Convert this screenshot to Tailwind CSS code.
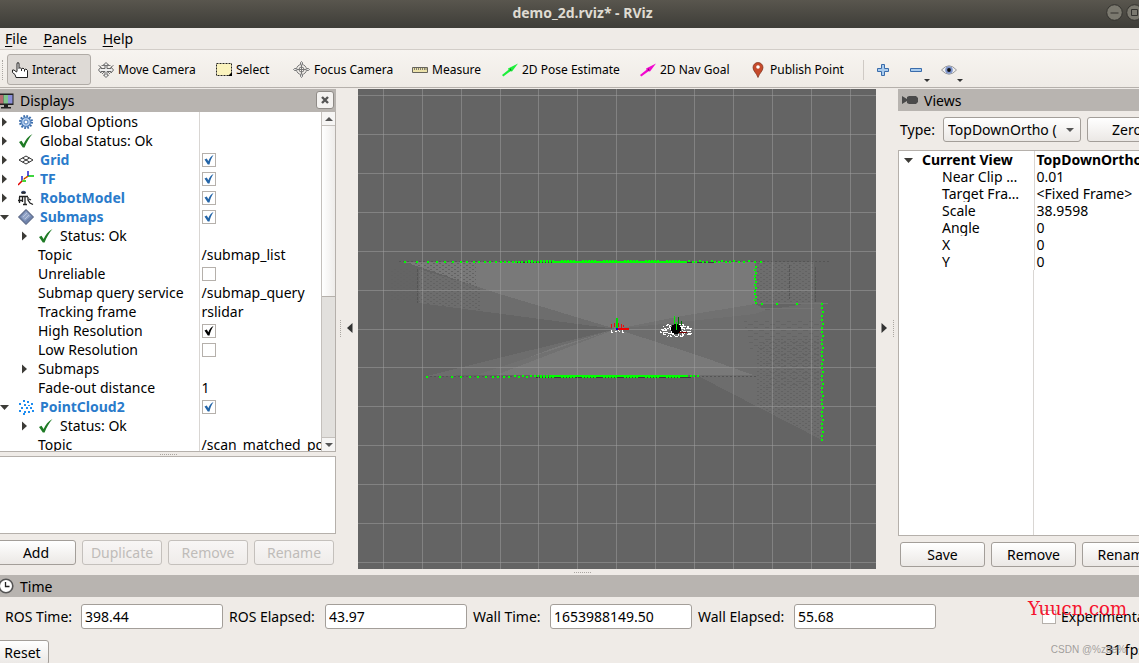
<!DOCTYPE html>
<html lang="en">
<head>
  <meta charset="UTF-8">
  <title>demo_2d.rviz* - RViz</title>
  <meta name="viewport" content="width=device-width, initial-scale=1.0">
  <script src="https://cdn.jsdelivr.net/npm/@tailwindcss/browser@4"></script>
</head>
<body class="h-screen overflow-hidden flex flex-col bg-[#efebe7] text-black text-[14px] leading-[19px] font-['Noto_Sans',sans-serif]">

  <!-- Shared icons -->
  <svg class="hidden">
    <symbol id="i-gear" viewBox="0 0 16 16"><circle cx="8" cy="8" r="5.8" fill="#a9c4e6" stroke="#3a6cab" stroke-width="2.4" stroke-dasharray="1.6 1.4"/><circle cx="8" cy="8" r="4.4" fill="#b7cfee" stroke="#4f80bd"/><circle cx="8" cy="8" r="2" fill="#fff" stroke="#4f80bd"/></symbol>
    <symbol id="i-ok" viewBox="0 0 16 16"><path d="M1 9 3.500 7.800 5.600 11C7.600 6.500 10 3.500 14.500 1 11 5 8.500 9.500 6.600 14.500H4.800z" fill="#1e7a24"/></symbol>
    <symbol id="i-grid" viewBox="0 0 16 16"><path d="M8 4 15 8 8 12 1 8zM4.500 6 11.500 10M11.500 6 4.500 10" fill="none" stroke="#333"/></symbol>
    <symbol id="i-tf" viewBox="0 0 16 16" fill="none" stroke-width="1.500"><path d="M0 14 4 10M6 8 10 5" stroke="#e00000"/><path d="M4 10H8M10 5H16" stroke="#00c800"/><path d="M4 10V5M10 5V0" stroke="#2020d0"/><path d="M4 10 10 5" stroke="#c8c800" stroke-dasharray="1 1"/></symbol>
    <symbol id="i-robot" viewBox="0 0 16 16"><path d="M3 2Q5.500-.5 8 2V3.500H3z" fill="#3b4a6b"/><path d="M4 3H7M1 6.500H10M1.500 7V13M4.500 7V12M7 7V15M10 7V10L12 13 15 14.500M0 10.500H4M5 14.500H9M11 9 13 10" stroke="#222" stroke-width="1.300" fill="none"/></symbol>
    <symbol id="i-map" viewBox="0 0 16 16"><path d="M8 .5 15.500 8 8 15.500.5 8z" fill="#6f83ab" stroke="#4a5674"/><path d="M8 2 13 7 7 12 3 8z" fill="#91a3c6"/><path d="M5 8 9 4M7 10 11 6" stroke="#c3cde2" stroke-width=".8"/></symbol>
    <symbol id="i-cloud" viewBox="0 0 16 16"><path d="M5 1h2v2H5zM9 2h2v2H9zM1 4h2v2H1zM6 5h2v2H6zM13 4h2v2h-2zM3 8h2v2H3zM8 8h2v2H8zM12 8h2v2h-2zM14 11h2v2h-2zM1 11h2v2H1zM6 12h2v2H6zM10 12h2v2h-2zM5 14h2v2H5zM10 6h2v1h-2z" fill="#1e8df0"/></symbol>
    <symbol id="i-tick" viewBox="0 0 14 14"><path d="M2.500 6.500 4.800 5.500 6.300 8.200C7.300 5.500 9 3.200 11.500 2 9.500 5 8.200 8 7.500 11.500H5.800z" fill="currentColor"/></symbol>
    <symbol id="i-right" viewBox="0 0 9 10"><path d="M2 .5 7 5 2 9.500z" fill="#3c3b37"/></symbol>
    <symbol id="i-down" viewBox="0 0 9 10"><path d="M0 3H9L4.500 8z" fill="#3c3b37"/></symbol>
  </svg>

  <!-- Title bar -->
  <header class="h-7 shrink-0 relative flex items-center justify-center pl-[26px] bg-linear-to-b from-[#59564e] to-[#3e3d38]">
    <h1 class="font-bold text-[#dfdbd2] pb-1">demo_2d.rviz* - RViz</h1>
    <div class="absolute top-1 right-0 flex gap-[3px]">
      <button aria-label="Minimize"><svg class="size-[17px]" viewBox="0 0 17 17"><circle cx="8.500" cy="8.500" r="7.800" fill="#7b796f" stroke="#34332f"/><path d="M4.500 9H12.500" stroke="#34332f"/></svg></button>
      <button aria-label="Maximize" class="w-[13px] overflow-hidden"><svg class="size-[17px] max-w-none" viewBox="0 0 17 17"><circle cx="8.500" cy="8.500" r="7.800" fill="#7b796f" stroke="#34332f"/><path d="M5.500 5.500H11.500V11.500H5.500z" fill="none" stroke="#34332f"/></svg></button>
    </div>
  </header>

  <!-- Menu -->
  <nav class="h-[22px] shrink-0 flex items-center gap-4 px-[5px] border-b border-[#d2cdc8]">
    <button><span class="underline underline-offset-2">F</span>ile</button>
    <button><span class="underline underline-offset-2">P</span>anels</button>
    <button><span class="underline underline-offset-2">H</span>elp</button>
  </nav>

  <!-- Tools -->
  <div class="h-[38px] pt-[2px] shrink-0 flex items-center gap-[2px] text-[12px] whitespace-nowrap bg-linear-to-b from-[#f7f4f0] to-[#efebe6] border-b border-[#b5b0ab] mb-px">
    <div class="w-[3px] h-5 ml-[2px] border-l border-dotted border-[#aaa6a1]"></div>
    <button class="flex items-center gap-1 w-[84px] h-[31px] pl-1 border border-[#b0aba6] rounded-[3px] bg-[#dedad6]">
      <svg class="size-4" viewBox="0 0 16 16"><path d="M5 9V2Q5 .5 6 .5T7 2V6.500L8 5.500 9.500 7 11 6 12.500 7.500 14 7 15.500 8.500V15.500H4L3 12.500.5 10.500V8H2L4.500 10z" fill="#fff" stroke="#222"/><path d="M9.500 7V9M12.500 7.500V9.500" stroke="#222"/></svg>
      Interact
    </button>
    <button class="flex items-center gap-1 w-[116px] h-[31px] pl-[5px]">
      <svg class="size-4" viewBox="0 0 16 16"><path d="M8 .5 10.500 3H9V6.500H13V5L15.500 8 13 11V9.500H9V13H10.500L8 15.500 5.500 13H7V9.500H3V11L.5 8 3 5V6.500H7V3H5.500z" fill="#eee" stroke="#666"/><path d="M.5 3.500 3 5M15.500 3.500 13 5M3.500 3.500H12.500M4 12 6 10M12 12 10 10" stroke="#777" fill="none"/></svg>
      Move Camera
    </button>
    <button class="flex items-center gap-1 w-[75px] h-[31px] pl-[5px]">
      <svg class="size-4" viewBox="0 0 16 16"><path d="M.5 1.500H15.500V13.500H.5z" fill="#fbf3bd" stroke="#222" stroke-dasharray="2 1"/><path d="M12 14 16 10V14z"/></svg>
      Select
    </button>
    <button class="flex items-center gap-1 w-[117px] h-[31px] pl-[5px]">
      <svg class="size-[17px]" viewBox="0 0 17 17" fill="none" stroke="#777"><circle cx="8.500" cy="8.500" r="5"/><circle cx="8.500" cy="8.500" r="2.500"/><path d="M8.500 3V14M3 8.500H14"/><path d="M7.500 3.500V1.500L8.500.5 9.500 1.500V3.500M7.500 13.500V15.500L8.500 16.500 9.500 15.500V13.500M3.500 7.500H1.500L.5 8.500 1.500 9.500H3.500M13.500 7.500H15.500L16.500 8.500 15.500 9.500H13.500" fill="#ddd"/></svg>
      Focus Camera
    </button>
    <button class="flex items-center gap-1 w-[88px] h-[31px] pl-[5px]">
      <svg class="size-4" viewBox="0 0 16 16"><path d="M.5 5.500H15.500V10.500H.5z" fill="#ece2ab" stroke="#66645c"/><path d="M2.500 6V8M4.500 6V8M6.500 6V8M8.500 6V8M10.500 6V8M12.500 6V8M14 6V8" stroke="#66645c" stroke-width=".8"/></svg>
      Measure
    </button>
    <button class="flex items-center gap-1 w-[136px] h-[31px] pl-[5px]">
      <svg class="size-4" viewBox="0 0 16 16"><path d="M0 13 6.500 7.800 6 6.500 16 1.500 10 9.500 8.500 9.200 1.300 14.500z" fill="#1df03a"/><path d="M8.500 6 9.500 8.500 7.500 8.500z" fill="#0a8a1c"/></svg>
      2D Pose Estimate
    </button>
    <button class="flex items-center gap-1 w-[110px] h-[31px] pl-[5px]">
      <svg class="size-4" viewBox="0 0 16 16"><path d="M0 13 6.500 7.800 6 6.500 16 1.500 10 9.500 8.500 9.200 1.300 14.500z" fill="#f207cf"/><path d="M8.500 6 9.500 8.500 7.500 8.500z" fill="#8a0a76"/></svg>
      2D Nav Goal
    </button>
    <button class="flex items-center gap-[6px] w-[114px] h-[31px] pl-[5px]">
      <svg class="w-3 h-4" viewBox="0 0 12 16"><path d="M6 .5A5 5 0 0 1 11 5.500C11 9 7.500 11 6 15.500 4.500 11 1 9 1 5.500A5 5 0 0 1 6 .5z" fill="#c64a2b" stroke="#7c2f1b" stroke-width=".7"/><circle cx="6" cy="5" r="1.800" fill="#fff"/></svg>
      Publish Point
    </button>
    <div class="h-5 border-l border-[#cfcac5] mr-[11px]"></div>
    <button aria-label="Add tool" class="mr-[19px]"><svg class="size-3" viewBox="0 0 12 12"><path d="M4.500.5H7.500V4.500H11.500V7.500H7.500V11.500H4.500V7.500H.5V4.500H4.500z" fill="#a9cbed" stroke="#3a6cab"/></svg></button>
    <button aria-label="Remove tool" class="relative mr-[17px]"><svg class="size-3" viewBox="0 0 12 12"><path d="M.5 4.500H11.500V7.500H.5z" fill="#a9cbed" stroke="#3a6cab"/></svg><svg class="absolute left-[14px] top-[15px] w-[6px] h-1" viewBox="0 0 6 4"><path d="M0 0H6L3 3z" fill="#333"/></svg></button>
    <button aria-label="Visibility" class="relative"><svg class="size-4" viewBox="0 0 16 16"><path d="M.5 8Q8-.5 15.500 8 8 16.500.5 8z" fill="#eee" stroke="#999"/><circle cx="8" cy="8" r="3.800" fill="#7f95cc"/><circle cx="8" cy="8" r="1.900" fill="#111"/></svg><svg class="absolute left-4 top-[17px] w-[6px] h-1" viewBox="0 0 6 4"><path d="M0 0H6L3 3z" fill="#333"/></svg></button>
  </div>

  <main class="flex-1 min-h-0 flex">
    <!-- Displays -->
    <section class="w-[336px] shrink-0 flex flex-col pb-[10px]">
      <div class="h-[23px] shrink-0 flex items-center bg-[#b8b4b0]">
        <svg class="w-[14px] h-4 mr-[6px]" viewBox="0 0 14 16"><path d="M-2 .5H13.500V12H-2z" fill="#222"/><path d="M-1 2H3.500V10.500H-1z" fill="#b56a6f"/><path d="M3.500 2H8V10.500H3.500z" fill="#7fc48c"/><path d="M8 2H12.500V10.500H8z" fill="#8a8fd8"/><path d="M4 12H8V14H11V15.500H1V14H4z" fill="#222"/></svg>
        <h2>Displays</h2>
        <button aria-label="Close" class="ml-auto mr-[2px] mb-[2px] size-[18px] grid place-items-center border border-[#8f8b87] rounded-[3px] bg-[#f4f2f0]"><svg class="size-2" viewBox="0 0 8 8"><path d="M1 1 7 7M7 1 1 7" stroke="#555" stroke-width="2.400"/></svg></button>
      </div>
      <div class="flex-1 min-h-0 flex border-r border-b border-[#b5b0ab] bg-white">
        <div class="flex-1 min-w-0 overflow-hidden">
          <table class="w-full table-fixed border-collapse whitespace-nowrap">
            <colgroup><col class="w-[199px]"><col></colgroup>
            <tbody id="displays"></tbody>
          </table>
        </div>
        <div class="w-[14px] flex flex-col border-l border-[#c4c0bc] bg-[#e2e0dd]">
          <div class="h-[14px] grid place-items-center bg-[#f6f5f4] border-b border-[#c4c0bc]"><svg class="w-2 h-1" viewBox="0 0 8 4"><path d="M0 4 4 0 8 4z" fill="#555"/></svg></div>
          <div class="h-[171px] bg-linear-to-r from-white to-[#eeecea] border-b border-[#b5b0ab]"></div>
          <div class="h-[14px] mt-auto grid place-items-center bg-[#f6f5f4] border-t border-[#c4c0bc]"><svg class="w-2 h-1" viewBox="0 0 8 4"><path d="M0 0H8L4 4z" fill="#555"/></svg></div>
        </div>
      </div>
      <div class="h-1 shrink-0 grid place-items-center"><div class="w-[17px] border-t border-dotted border-[#aaa6a1]"></div></div>
      <div class="h-[78px] shrink-0 border border-l-0 border-[#b5b0ab] bg-white"></div>
      <div class="flex shrink-0 gap-[6px] mt-[6px]">
        <button class="-ml-1 w-20 h-[25px] border border-[#a39e99] rounded-[3px] bg-linear-to-b from-white to-[#ebe8e5]">Add</button>
        <button disabled class="w-20 h-[25px] border border-[#c4c0bc] rounded-[3px] bg-linear-to-b from-[#f8f6f5] to-[#efecea] text-[#bfbcb9]">Duplicate</button>
        <button disabled class="w-20 h-[25px] border border-[#c4c0bc] rounded-[3px] bg-linear-to-b from-[#f8f6f5] to-[#efecea] text-[#bfbcb9]">Remove</button>
        <button disabled class="w-20 h-[25px] border border-[#c4c0bc] rounded-[3px] bg-linear-to-b from-[#f8f6f5] to-[#efecea] text-[#bfbcb9]">Rename</button>
      </div>
    </section>

    <div class="w-[22px] shrink-0 flex items-center justify-center gap-[6px] pr-[2px] pb-2">
      <div class="h-[17px] border-l border-dotted border-[#aaa6a1]"></div>
      <svg class="w-[6px] h-[10px]" viewBox="0 0 6 10"><path d="M5.500 0V10L0 5z" fill="#333"/></svg>
    </div>

    <!-- 3D view, origin at the lidar frame -->
    <section class="flex-1 min-w-0 flex flex-col">
      <svg id="scene" class="flex-1 min-h-0 w-full bg-[#646464]" viewBox="-258 -240 518 480" preserveAspectRatio="xMidYMid slice" shape-rendering="crispEdges">
        <defs>
          <pattern id="dither" width="6" height="4" patternUnits="userSpaceOnUse"><path d="M0 0h2v1H0zM3 2h2v1H3z" fill="#626262"/></pattern>
          <pattern id="streak" width="11" height="6" patternUnits="userSpaceOnUse"><path d="M0 1h5v1H0zM6 4h4v1H6z" fill="#646464"/></pattern>
        </defs>
        <path d="M0 0-197-60V-26zM0 0-189 47-131 46zM0 0 139-17 200-27H206V111L84 48zM139-67H198V-26H139z" fill="#6d6d6d"/>
        <path d="M0 0-123-37-211-67H139V-17L60-7zM0 0-60 18-133 46H81L137 46 84 27z" fill="#797979"/>
        <path d="M0 0 139-15 150-19 139-25 60-12zM0 0-140 46-120 46z" fill="#717171"/>
        <path d="M-211-67H-140V-42L-197-60zM-197-60-135-42V-19L-197-26zM-225-60H-198V-28H-225zM139-67H199V-27H139zM150 10H205V109L140 76V20z" fill="url(#dither)"/>
        <path d="M128-8H205V60H150V20H134z" fill="url(#streak)"/>
        <path d="M142-26H212M142-21H198" stroke="#747474"/>
        <path d="M-198.500-60V-26M199-62V-27M173-64V-30" stroke="#555" stroke-dasharray="3 1"/>
        <path d="M-217-67.500H215M-190 47.500H140" stroke="#555" stroke-dasharray="2 2"/>
        <path d="M-100-66.500H100M-80 48.500H75" stroke="#3c3c3c"/>
        <g id="grid" fill="#a0a0a0" fill-opacity=".5"></g>
        <g id="scan" fill="#00ff00"></g>
        <!-- lidar frame -->
        <path d="M-5-5v4M-2-6v4M2-6v4M5-5v4M7-4v2" stroke="#e01010"/>
        <path d="M-5 1v2h2M-1 2h2M2 1l2 2M6 1v2h2" stroke="#fff" fill="none"/>
        <path d="M0-11h2V0H0z" fill="#00e000"/><path d="M1-1h12V1H1z" fill="#f00000"/><path d="M0-1h2v2H0z" fill="#0000f0"/>
        <!-- base frame -->
        <g id="labels" fill="#fff"></g>
        <circle cx="60" cy="0" r="5" fill="#000"/>
        <path d="M63 3h8" stroke="#700"/>
        <path d="M58.500-13v8M60.500-7v8" stroke="#00f000"/><path d="M62.500-12v8M65.500-8v4" stroke="#007000"/>
      </svg>
      <div class="h-[6px] shrink-0 grid justify-center items-center pr-[70px]"><div class="w-[17px] border-t border-dotted border-[#aaa6a1]"></div></div>
    </section>

    <div class="w-[22px] shrink-0 flex items-center justify-center gap-[6px] pb-2">
      <svg class="w-[6px] h-[10px]" viewBox="0 0 6 10"><path d="M.5 0V10L6 5z" fill="#333"/></svg>
      <div class="h-[17px] border-l border-dotted border-[#aaa6a1]"></div>
    </div>

    <!-- Views -->
    <section class="w-[241px] shrink-0 overflow-hidden">
      <div class="w-[272px] h-full flex flex-col pb-2">
        <div class="h-[22px] shrink-0 flex items-center pl-1 gap-[6px] bg-[#b8b4b0]">
          <svg class="w-4 h-[10px]" viewBox="0 0 16 10"><path d="M0 1 5 4V2L7 1H14L16 3V7L14 9H7L5 8V6L0 9z" fill="#4a4a4a"/></svg>
          <h2>Views</h2>
        </div>
        <div class="flex items-center shrink-0 pl-[2px] mt-[6px] mb-2">
          <label for="view-type" class="w-[43px]">Type:</label>
          <div class="relative w-[138px]">
            <select id="view-type" class="appearance-none w-full h-[25px] pl-1 pr-[23px] border border-[#a39e99] rounded-[3px] bg-linear-to-b from-white to-[#ebe8e5]"><option>TopDownOrtho (rviz)</option></select>
            <svg class="absolute right-[7px] top-[11px] w-2 h-1 pointer-events-none" viewBox="0 0 8 4"><path d="M0 0H8L4 4z" fill="#555"/></svg>
          </div>
          <button class="w-20 h-[25px] ml-[6px] border border-[#a39e99] rounded-[3px] bg-linear-to-b from-white to-[#ebe8e5]">Zero</button>
        </div>
        <div class="flex-1 min-h-0 border border-[#b5b0ab] bg-white leading-[17px] flex flex-col">
          <table class="w-full table-fixed border-collapse whitespace-nowrap">
            <colgroup><col class="w-[135px]"><col></colgroup>
            <tbody id="views"></tbody>
          </table>
          <div class="flex-1 w-[135px] border-r border-[#d9d6d3]"></div>
        </div>
        <div class="flex shrink-0 gap-[6px] pl-[2px] mt-[6px]">
          <button class="w-[85px] h-[25px] border border-[#a39e99] rounded-[3px] bg-linear-to-b from-white to-[#ebe8e5]">Save</button>
          <button class="w-[85px] h-[25px] border border-[#a39e99] rounded-[3px] bg-linear-to-b from-white to-[#ebe8e5]">Remove</button>
          <button class="w-[85px] h-[25px] border border-[#a39e99] rounded-[3px] bg-linear-to-b from-white to-[#ebe8e5]">Rename</button>
        </div>
      </div>
    </section>
  </main>

  <!-- Time -->
  <footer class="shrink-0 relative h-[88px] overflow-hidden whitespace-nowrap">
    <div class="h-[22px] flex items-center gap-[6px] bg-[#b8b4b0]">
      <svg class="w-[14px] h-4" viewBox="0 0 14 16"><circle cx="6" cy="8" r="6.800" fill="#fff" stroke="#555" stroke-width="1.600"/><path d="M5.500 4V8.500H9.500" fill="none" stroke="#222" stroke-width="1.300"/></svg>
      <h2>Time</h2>
    </div>
    <div class="flex items-center gap-[6px] pl-[5px] mt-[7px]">
      <label for="ros-time" class="w-[70px] shrink-0">ROS Time:</label>
      <input id="ros-time" value="398.44" class="w-[142px] shrink-0 h-[25px] px-[3px] border border-[#a39e99] rounded-[3px] bg-white">
      <label for="ros-elapsed" class="w-[90px] shrink-0">ROS Elapsed:</label>
      <input id="ros-elapsed" value="43.97" class="w-[142px] shrink-0 h-[25px] px-[3px] border border-[#a39e99] rounded-[3px] bg-white">
      <label for="wall-time" class="w-[71px] shrink-0">Wall Time:</label>
      <input id="wall-time" value="1653988149.50" class="w-[142px] shrink-0 h-[25px] px-[3px] border border-[#a39e99] rounded-[3px] bg-white">
      <label for="wall-elapsed" class="w-[90px] shrink-0">Wall Elapsed:</label>
      <input id="wall-elapsed" value="55.68" class="w-[142px] shrink-0 h-[25px] px-[3px] border border-[#a39e99] rounded-[3px] bg-white">
      <label class="ml-[100px] shrink-0 flex items-center gap-[5px]"><input type="checkbox" class="appearance-none size-[14px] border border-[#b5b0ab] bg-white">Experimental</label>
    </div>
    <div class="flex justify-between items-start mt-[11px]">
      <button class="-ml-1 w-[53px] h-[25px] border border-[#a39e99] rounded-[3px] bg-linear-to-b from-white to-[#ebe8e5]">Reset</button>
      <span class="-mr-[6px]">31 fps</span>
    </div>
    <span class="absolute right-3 top-[23px] text-[18px] leading-[22px] text-[#f5122d] font-['DejaVu_Serif',serif]">Yuucn.com</span>
    <span class="absolute right-[13px] top-[68px] text-[10px] leading-[13px] text-[#8c8a88]/80 font-['Liberation_Sans',sans-serif]">CSDN @%zde%</span>
  </footer>

<script>
// kind: top = display, sub = status or group, prop = plain property
const displays = [
  { kind: "top", arrow: "right", icon: "gear", name: "Global Options" },
  { kind: "top", arrow: "right", icon: "ok", name: "Global Status: Ok" },
  { kind: "top", arrow: "right", icon: "grid", name: "Grid", bold: true, check: "on" },
  { kind: "top", arrow: "right", icon: "tf", name: "TF", bold: true, check: "on" },
  { kind: "top", arrow: "right", icon: "robot", name: "RobotModel", bold: true, check: "on" },
  { kind: "top", arrow: "down", icon: "map", name: "Submaps", bold: true, check: "on" },
  { kind: "sub", arrow: "right", icon: "ok", name: "Status: Ok" },
  { kind: "prop", name: "Topic", value: "/submap_list" },
  { kind: "prop", name: "Unreliable", check: "off" },
  { kind: "prop", name: "Submap query service", value: "/submap_query" },
  { kind: "prop", name: "Tracking frame", value: "rslidar" },
  { kind: "prop", name: "High Resolution", check: "on" },
  { kind: "prop", name: "Low Resolution", check: "off" },
  { kind: "sub", arrow: "right", name: "Submaps" },
  { kind: "prop", name: "Fade-out distance", value: "1" },
  { kind: "top", arrow: "down", icon: "cloud", name: "PointCloud2", bold: true, check: "on" },
  { kind: "sub", arrow: "right", icon: "ok", name: "Status: Ok" },
  { kind: "prop", name: "Topic", value: "/scan_matched_points2" }
];
const indent = { top: "pl-0", sub: "pl-5", prop: "pl-[38px]" };

function checkbox(row) {
  const tick = row.check === "on" ? `<svg class="absolute inset-0 size-[14px] pointer-events-none ${row.bold ? "text-[#2465a8]" : "text-black"}"><use href="#i-tick"/></svg>` : "";
  return `<span class="relative block size-[14px]"><input type="checkbox" aria-label="${row.name}" ${row.check === "on" ? "checked" : ""} class="block appearance-none size-[14px] border border-[#b5b0ab] bg-white">${tick}</span>`;
}

document.getElementById("displays").innerHTML = displays.map(row => {
  const arrow = row.arrow ? `<svg class="w-[9px] h-[10px] shrink-0 mr-[9px]"><use href="#i-${row.arrow}"/></svg>` : "";
  const icon = row.icon ? `<svg class="size-4 shrink-0 mr-[6px]"><use href="#i-${row.icon}"/></svg>` : "";
  return `<tr class="h-[19px]">
    <td class="p-0 border-r border-[#d9d6d3]"><div class="flex items-center h-[19px] ${indent[row.kind]} ${row.bold ? "font-bold text-[#2a7bcb]" : ""}">${arrow}${icon}${row.name}</div></td>
    <td class="p-0 pl-[2px] overflow-hidden">${row.check ? checkbox(row) : row.value || ""}</td>
  </tr>`;
}).join("");

const views = [["Near Clip Distance", "0.01"], ["Target Frame", "&lt;Fixed Frame&gt;"], ["Scale", "38.9598"], ["Angle", "0"], ["X", "0"], ["Y", "0"]];
document.getElementById("views").innerHTML =
  `<tr class="h-[17px] font-bold"><td class="p-0 border-r border-[#d9d6d3]"><div class="flex items-center pl-[5px]"><svg class="w-[9px] h-[10px] mr-[9px]"><use href="#i-down"/></svg>Current View</div></td><td class="p-0 pl-[2px]">TopDownOrtho (rviz)</td></tr>` +
  views.map(([name, value]) => `<tr class="h-[17px]"><td class="p-0 pl-[43px] pr-[7px] border-r border-[#d9d6d3] truncate">${name}</td><td class="p-0 pl-[2px]">${value}</td></tr>`).join("");

// Grid cells are 38.96px wide at the current scale
const cell = 38.96;
let lines = "";
for (let i = -20; i <= 20; i++) {
  lines += `<rect x="${Math.floor(i * cell + 0.9)}" y="-1000" width="1" height="2000"/><rect x="-1500" y="${Math.floor(i * cell)}" width="3000" height="1"/>`;
}
document.getElementById("grid").innerHTML = lines;

// Laser scan
const dots = [];
const dot = (x, y, w = 2) => dots.push(`<rect x="${x}" y="${y}" width="${w}" height="2"/>`);
[-212, -200, -189, -180, -172, -164, -156, -150, -143, -138, -132, -127, -121, -116, -112, -108, -104, -101, -98, -95, -91].forEach(x => dot(x, -68));
for (let x = -88; x < 70; x += 3) {
  dot(x, -68, x < -64 ? 2 : 3);
  if (x * x % 7 < 3) dot(x, -69);
}
[72, 76, 79, 83, 86, 90, 95, 98, 102, 105, 109, 113, 117, 122, 127, 132, 138, 144].forEach((x, i) => dot(x, i % 3 ? -68 : -69));
[-190, -177, -165, -156, -147, -139, -131, -124, -119, -113, -108, -102, -98, -94, -90, -86].forEach((x, i) => dot(x, i > 10 && i % 2 ? 46 : 47));
for (let x = -82; x < 70; x += 3) {
  dot(x, 46, x < -68 ? 2 : 3);
  if (x * x % 7 < 3) dot(x, 47);
}
[70, 74, 77, 81].forEach(x => dot(x, 46));
for (let y = -63; y < -26; y += 3) dot(y * y % 5 < 2 ? 138 : 139, y);
[[145, -26], [160, -26], [180, -26]].forEach(([x, y]) => dot(x, y));
for (let y = -26; y < 111; y += 4) dot(y % 3 ? 205 : 206, y);
document.getElementById("scan").innerHTML = dots.join("");

// Overlapping frame names around the base
let specks = "", seed = 7;
const rand = n => (seed = (seed * 1103515245 + 12345) % 2147483648, Math.floor(seed / 65536) % n);
for (let i = 0; i < 150; i++) {
  const x = 44 + rand(32), y = -5 + rand(13);
  if (Math.abs(x - 60) / 17 + Math.abs(y - 1) / 11 < 1.15) specks += `<rect x="${x}" y="${y}" width="${1 + i % 2}" height="1"/>`;
}
document.getElementById("labels").innerHTML = specks;
</script>
</body>
</html>
